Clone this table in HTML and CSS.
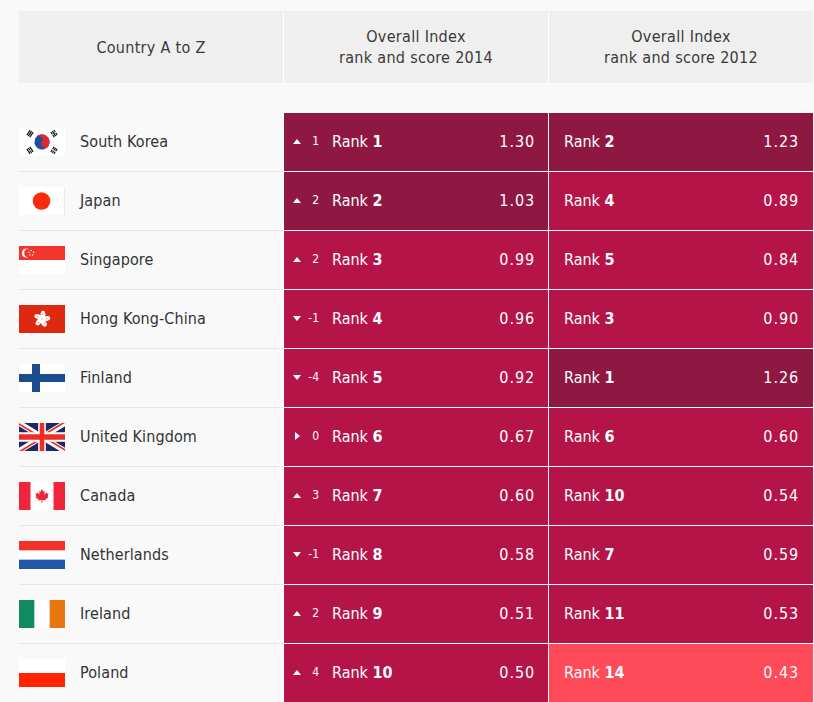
FILE: index.html
```html
<!DOCTYPE html>
<html lang="en">
<head>
<meta charset="utf-8">
<title>Overall Index ranking</title>
<link rel="stylesheet" href="styles.css">
</head>
<body>
<div class="page">
  <div class="table">
    <div class="row head">
      <div class="hcell">Country A to Z</div>
      <div class="hcell">Overall Index<br>rank and score 2014</div>
      <div class="hcell">Overall Index<br>rank and score 2012</div>
    </div>
    <div class="spacer"></div>

    <!-- South Korea -->
    <div class="row">
      <div class="country">
        <svg class="flag" viewBox="0 0 46 28">
          <rect width="46" height="28" fill="#fff"/>
          <g transform="translate(23 14) rotate(33.7)">
            <circle r="7.6" fill="#1f4ea3"/>
            <path d="M-7.6,0 A7.6,7.6 0 0 1 7.6,0 A3.8,3.8 0 0 1 0,0 A3.8,3.8 0 0 0 -7.6,0Z" fill="#e5262f"/>
          </g>
          <g fill="#111">
            <g transform="translate(11 5.6) rotate(33.7)"><rect x="-2.4" y="-3" width="1.2" height="6"/><rect x="-0.6" y="-3" width="1.2" height="6"/><rect x="1.2" y="-3" width="1.2" height="6"/></g>
            <g transform="translate(35 22.4) rotate(33.7)"><rect x="-2.4" y="-3" width="1.2" height="2.6"/><rect x="-2.4" y="0.4" width="1.2" height="2.6"/><rect x="-0.6" y="-3" width="1.2" height="2.6"/><rect x="-0.6" y="0.4" width="1.2" height="2.6"/><rect x="1.2" y="-3" width="1.2" height="2.6"/><rect x="1.2" y="0.4" width="1.2" height="2.6"/></g>
            <g transform="translate(35 5.6) rotate(-33.7)"><rect x="-2.4" y="-3" width="1.2" height="2.6"/><rect x="-2.4" y="0.4" width="1.2" height="2.6"/><rect x="-0.6" y="-3" width="1.2" height="6"/><rect x="1.2" y="-3" width="1.2" height="2.6"/><rect x="1.2" y="0.4" width="1.2" height="2.6"/></g>
            <g transform="translate(11 22.4) rotate(-33.7)"><rect x="-2.4" y="-3" width="1.2" height="6"/><rect x="-0.6" y="-3" width="1.2" height="2.6"/><rect x="-0.6" y="0.4" width="1.2" height="2.6"/><rect x="1.2" y="-3" width="1.2" height="6"/></g>
          </g>
        </svg>
        <span class="name">South Korea</span>
      </div>
      <div class="cell now dark">
        <span class="chg"><span class="tri"><svg width="8" height="5" viewBox="0 0 8 5"><polygon points="0,5 4,0 8,5" fill="#fff"/></svg></span><span class="num">1</span></span>
        <span class="rank">Rank <b>1</b></span><span class="score">1.30</span>
      </div>
      <div class="cell then dark"><span class="rank">Rank <b>2</b></span><span class="score">1.23</span></div>
    </div>

    <!-- Japan -->
    <div class="row">
      <div class="country">
        <svg class="flag" viewBox="0 0 46 28">
          <rect width="46" height="28" fill="#fff"/>
          <rect x="45" width="1" height="28" fill="#ececec"/>
          <circle cx="22.5" cy="14" r="8.8" fill="#fb2a0c"/>
        </svg>
        <span class="name">Japan</span>
      </div>
      <div class="cell now dark">
        <span class="chg"><span class="tri"><svg width="8" height="5" viewBox="0 0 8 5"><polygon points="0,5 4,0 8,5" fill="#fff"/></svg></span><span class="num">2</span></span>
        <span class="rank">Rank <b>2</b></span><span class="score">1.03</span>
      </div>
      <div class="cell then mid"><span class="rank">Rank <b>4</b></span><span class="score">0.89</span></div>
    </div>

    <!-- Singapore -->
    <div class="row">
      <div class="country">
        <svg class="flag" viewBox="0 0 46 28">
          <rect width="46" height="28" fill="#fff"/>
          <rect width="46" height="14" fill="#f2342c"/>
          <circle cx="7.4" cy="7" r="4.6" fill="#fff"/>
          <circle cx="9.3" cy="7" r="4.1" fill="#f2342c"/>
          <g fill="#fff">
            <circle cx="12.2" cy="4.6" r="0.75"/>
            <circle cx="14.5" cy="6.3" r="0.75"/>
            <circle cx="13.6" cy="9" r="0.75"/>
            <circle cx="10.8" cy="9" r="0.75"/>
            <circle cx="9.9" cy="6.3" r="0.75"/>
          </g>
        </svg>
        <span class="name">Singapore</span>
      </div>
      <div class="cell now mid">
        <span class="chg"><span class="tri"><svg width="8" height="5" viewBox="0 0 8 5"><polygon points="0,5 4,0 8,5" fill="#fff"/></svg></span><span class="num">2</span></span>
        <span class="rank">Rank <b>3</b></span><span class="score">0.99</span>
      </div>
      <div class="cell then mid"><span class="rank">Rank <b>5</b></span><span class="score">0.84</span></div>
    </div>

    <!-- Hong Kong -->
    <div class="row">
      <div class="country">
        <svg class="flag" viewBox="0 0 46 28">
          <rect width="46" height="28" fill="#de2910"/>
          <g transform="translate(23 14)" fill="#fff">
            <ellipse cx="1" cy="-4.2" rx="2.4" ry="4"/>
            <ellipse cx="1" cy="-4.2" rx="2.4" ry="4" transform="rotate(72)"/>
            <ellipse cx="1" cy="-4.2" rx="2.4" ry="4" transform="rotate(144)"/>
            <ellipse cx="1" cy="-4.2" rx="2.4" ry="4" transform="rotate(216)"/>
            <ellipse cx="1" cy="-4.2" rx="2.4" ry="4" transform="rotate(288)"/>
          </g>
          <g transform="translate(23 14)" fill="#de2910">
            <circle cx="0.6" cy="-4.6" r="0.5"/>
            <circle cx="0.6" cy="-4.6" r="0.5" transform="rotate(72)"/>
            <circle cx="0.6" cy="-4.6" r="0.5" transform="rotate(144)"/>
            <circle cx="0.6" cy="-4.6" r="0.5" transform="rotate(216)"/>
            <circle cx="0.6" cy="-4.6" r="0.5" transform="rotate(288)"/>
          </g>
        </svg>
        <span class="name">Hong Kong-China</span>
      </div>
      <div class="cell now mid">
        <span class="chg"><span class="tri"><svg width="8" height="5" viewBox="0 0 8 5"><polygon points="0,0 8,0 4,5" fill="#fff"/></svg></span><span class="num">-1</span></span>
        <span class="rank">Rank <b>4</b></span><span class="score">0.96</span>
      </div>
      <div class="cell then mid"><span class="rank">Rank <b>3</b></span><span class="score">0.90</span></div>
    </div>

    <!-- Finland -->
    <div class="row">
      <div class="country">
        <svg class="flag" viewBox="0 0 46 28">
          <rect width="46" height="28" fill="#fff"/>
          <rect x="13" width="8" height="28" fill="#1d4c8e"/>
          <rect y="10" width="46" height="8" fill="#1d4c8e"/>
        </svg>
        <span class="name">Finland</span>
      </div>
      <div class="cell now mid">
        <span class="chg"><span class="tri"><svg width="8" height="5" viewBox="0 0 8 5"><polygon points="0,0 8,0 4,5" fill="#fff"/></svg></span><span class="num">-4</span></span>
        <span class="rank">Rank <b>5</b></span><span class="score">0.92</span>
      </div>
      <div class="cell then dark"><span class="rank">Rank <b>1</b></span><span class="score">1.26</span></div>
    </div>

    <!-- United Kingdom -->
    <div class="row">
      <div class="country">
        <svg class="flag" viewBox="0 0 60 30" preserveAspectRatio="none">
          <clipPath id="ukt"><path d="M30,15 h30 v15 z v15 h-30 z h-30 v-15 z v-15 h30 z"/></clipPath>
          <rect width="60" height="30" fill="#1b2a66"/>
          <path d="M0,0 L60,30 M60,0 L0,30" stroke="#fff" stroke-width="6"/>
          <path d="M0,0 L60,30 M60,0 L0,30" clip-path="url(#ukt)" stroke="#ee2d24" stroke-width="4"/>
          <path d="M30,0 v30 M0,15 h60" stroke="#fff" stroke-width="10"/>
          <path d="M30,0 v30 M0,15 h60" stroke="#ee2d24" stroke-width="6"/>
        </svg>
        <span class="name">United Kingdom</span>
      </div>
      <div class="cell now mid">
        <span class="chg"><span class="tri"><svg width="5" height="8" viewBox="0 0 5 8"><polygon points="0,0 5,4 0,8" fill="#fff"/></svg></span><span class="num">0</span></span>
        <span class="rank">Rank <b>6</b></span><span class="score">0.67</span>
      </div>
      <div class="cell then mid"><span class="rank">Rank <b>6</b></span><span class="score">0.60</span></div>
    </div>

    <!-- Canada -->
    <div class="row">
      <div class="country">
        <svg class="flag" viewBox="0 0 46 28">
          <rect width="46" height="28" fill="#fff"/>
          <rect width="11.5" height="28" fill="#f0253a"/>
          <rect x="34.5" width="11.5" height="28" fill="#f0253a"/>
          <path transform="translate(23 13.4) scale(1.3)" fill="#f0253a" d="M0,-5 L1.2,-2.8 L2.2,-3.4 L1.8,-0.6 L3.6,-2.2 L4.2,-1.2 L5,-1.6 L4.4,0.8 L5,1.4 L2.6,3.2 L2.8,4 L0.35,3.6 L0.35,5.6 L-0.35,5.6 L-0.35,3.6 L-2.8,4 L-2.6,3.2 L-5,1.4 L-4.4,0.8 L-5,-1.6 L-4.2,-1.2 L-3.6,-2.2 L-1.8,-0.6 L-2.2,-3.4 L-1.2,-2.8 Z"/>
        </svg>
        <span class="name">Canada</span>
      </div>
      <div class="cell now mid">
        <span class="chg"><span class="tri"><svg width="8" height="5" viewBox="0 0 8 5"><polygon points="0,5 4,0 8,5" fill="#fff"/></svg></span><span class="num">3</span></span>
        <span class="rank">Rank <b>7</b></span><span class="score">0.60</span>
      </div>
      <div class="cell then mid"><span class="rank">Rank <b>10</b></span><span class="score">0.54</span></div>
    </div>

    <!-- Netherlands -->
    <div class="row">
      <div class="country">
        <svg class="flag" viewBox="0 0 46 28">
          <rect width="46" height="28" fill="#fff"/>
          <rect width="46" height="9.34" fill="#f0302a"/>
          <rect y="18.66" width="46" height="9.34" fill="#2356a6"/>
        </svg>
        <span class="name">Netherlands</span>
      </div>
      <div class="cell now mid">
        <span class="chg"><span class="tri"><svg width="8" height="5" viewBox="0 0 8 5"><polygon points="0,0 8,0 4,5" fill="#fff"/></svg></span><span class="num">-1</span></span>
        <span class="rank">Rank <b>8</b></span><span class="score">0.58</span>
      </div>
      <div class="cell then mid"><span class="rank">Rank <b>7</b></span><span class="score">0.59</span></div>
    </div>

    <!-- Ireland -->
    <div class="row">
      <div class="country">
        <svg class="flag" viewBox="0 0 46 28">
          <rect width="46" height="28" fill="#fff"/>
          <rect width="15.34" height="28" fill="#128a63"/>
          <rect x="30.66" width="15.34" height="28" fill="#e8770f"/>
        </svg>
        <span class="name">Ireland</span>
      </div>
      <div class="cell now mid">
        <span class="chg"><span class="tri"><svg width="8" height="5" viewBox="0 0 8 5"><polygon points="0,5 4,0 8,5" fill="#fff"/></svg></span><span class="num">2</span></span>
        <span class="rank">Rank <b>9</b></span><span class="score">0.51</span>
      </div>
      <div class="cell then mid"><span class="rank">Rank <b>11</b></span><span class="score">0.53</span></div>
    </div>

    <!-- Poland -->
    <div class="row">
      <div class="country">
        <svg class="flag" viewBox="0 0 46 28">
          <rect width="46" height="28" fill="#fff"/>
          <rect y="14" width="46" height="14" fill="#ff2300"/>
        </svg>
        <span class="name">Poland</span>
      </div>
      <div class="cell now mid">
        <span class="chg"><span class="tri"><svg width="8" height="5" viewBox="0 0 8 5"><polygon points="0,5 4,0 8,5" fill="#fff"/></svg></span><span class="num">4</span></span>
        <span class="rank">Rank <b>10</b></span><span class="score">0.50</span>
      </div>
      <div class="cell then light"><span class="rank">Rank <b>14</b></span><span class="score">0.43</span></div>
    </div>
  </div>
</div>
</body>
</html>
```

FILE: styles.css
```css
html, body {
  margin: 0;
  padding: 0;
  background: #f9f9f9;
}

body {
  font-family: "DejaVu Sans Condensed", "DejaVu Sans", sans-serif;
  font-stretch: condensed;
  color: #333;
}

.page {
  padding: 11px 0 0 19px;
  overflow: hidden;
}

.table {
  display: flex;
  flex-direction: column;
  width: 794px;
}

.row {
  display: grid;
  grid-template-columns: 264px 265px 265px;
}

.head .hcell {
  background: #efefef;
  height: 72px;
  display: flex;
  align-items: center;
  justify-content: center;
  text-align: center;
  font-size: 16px;
  line-height: 21px;
  letter-spacing: 0.3px;
  color: #3a3a3a;
}

.head .hcell + .hcell {
  border-left: 1px solid #fff;
}

.spacer {
  height: 30px;
}

.country {
  box-sizing: border-box;
  height: 59px;
  padding-bottom: 2px;
  border-bottom: 1px solid #e8e8e8;
  display: flex;
  align-items: center;
}

.flag {
  width: 46px;
  height: 28px;
  display: block;
  flex: none;
  margin-top: 2px;
}

.name {
  margin-left: 15px;
  font-size: 16px;
  letter-spacing: 0.1px;
  color: #333;
}

.cell {
  box-sizing: border-box;
  height: 59px;
  padding-bottom: 2px;
  border-left: 1px solid #fff;
  border-bottom: 1px solid #fff;
  display: flex;
  align-items: center;
  color: #fff;
  font-size: 16px;
}

.cell.now {
  padding-left: 9px;
  padding-right: 14px;
}

.cell.then {
  padding-left: 15px;
  padding-right: 15px;
}

.dark { background: #8e1842; }
.mid { background: #b41448; }
.light { background: #ff4a5a; }

.chg {
  display: flex;
  align-items: center;
  width: 26px;
  flex: none;
}

.tri {
  width: 8px;
  display: flex;
  justify-content: center;
  align-items: center;
}

.tri svg {
  display: block;
}

.num {
  margin-left: auto;
  font-size: 12px;
}

.now .rank {
  margin-left: 13px;
}

.rank b {
  font-weight: bold;
}

.score {
  margin-left: auto;
  letter-spacing: 0.9px;
  margin-right: -1px;
}
```
